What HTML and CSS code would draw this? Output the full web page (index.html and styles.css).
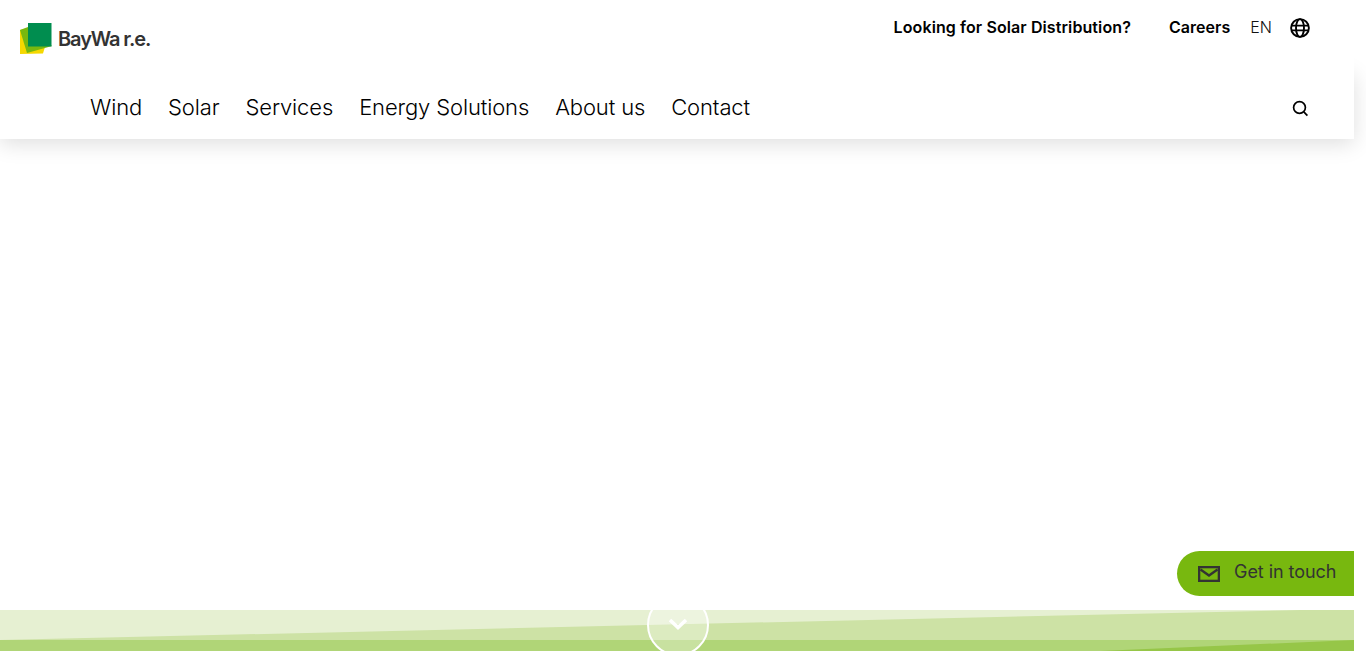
FILE: index.html
```html
<!DOCTYPE html>
<html lang="en">
<head>
<meta charset="utf-8">
<title>BayWa r.e.</title>
<link rel="stylesheet" href="styles.css">
</head>
<body>
<div class="page">
  <header class="header">
    <div class="topbar">
      <a class="logo" href="#">
        <svg class="logo-mark" width="32" height="32" viewBox="0 0 32 32">
          <polygon points="0,7 8,5 25,24 23,30.5 0,31" fill="#f5d800"/>
          <polygon points="0,7 8,4 32,23 7,30" fill="#78b80f"/>
          <rect x="8" y="0" width="23.5" height="23.5" fill="#008d4f"/>
        </svg>
        <span class="logo-text">BayWa r.e.</span>
      </a>
      <nav class="meta">
        <a class="meta-link meta-solar" href="#">Looking for Solar Distribution?</a>
        <a class="meta-link meta-careers" href="#">Careers</a>
        <span class="lang">EN</span>
        <svg class="globe" width="20" height="20" viewBox="0 0 20 20" fill="none" stroke="#000" stroke-width="1.9">
          <circle cx="10" cy="10" r="8.9"/>
          <ellipse cx="10" cy="10" rx="4" ry="8.9"/>
          <path d="M1.5 7.6h17M1.5 12.4h17"/>
        </svg>
      </nav>
    </div>
    <div class="navbar">
      <nav class="mainnav">
        <a href="#">Wind</a>
        <a href="#">Solar</a>
        <a href="#">Services</a>
        <a href="#">Energy Solutions</a>
        <a href="#">About us</a>
        <a href="#">Contact</a>
      </nav>
      <svg class="search" width="17" height="17" viewBox="0 0 17 17" fill="none" stroke="#000" stroke-width="1.7">
        <circle cx="7.5" cy="7.5" r="5.9"/>
        <path d="M11.8 11.8l3.6 3.8"/>
      </svg>
    </div>
  </header>
  <main class="hero"></main>
  <div class="band">
    <svg class="band-art" width="1354" height="41" viewBox="0 0 1354 41" preserveAspectRatio="none">
      <rect width="1354" height="41" fill="#e6f0d2"/>
      <polygon points="0,30 1300,0 1354,0 1354,41 0,41" fill="#cde2a5"/>
      <rect y="30" width="1354" height="11" fill="#b0d577"/>
      <polygon points="1100,41 1354,30 1354,41" fill="#96c648"/>
    </svg>
    <div class="scroll-circle">
      <svg class="chevron" width="20" height="12" viewBox="0 0 20 12" fill="none" stroke="#fff" stroke-width="3.6">
        <path d="M2 2l8 7.5L18 2"/>
      </svg>
    </div>
  </div>
  <a class="touch" href="#">
    <svg class="mail" width="22" height="16" viewBox="0 0 22 16" fill="none" stroke="#333" stroke-width="2.3">
      <rect x="1.15" y="1.15" width="19.7" height="13.7"/>
      <path d="M2.5 3.5L11 9.5l8.5-6"/>
    </svg>
    <span class="touch-label">Get in touch</span>
  </a>
</div>
</body>
</html>
```
FILE: styles.css
```css
html, body {
  margin: 0;
  padding: 0;
  background: #fff;
  overflow: hidden;
}
body {
  font-family: Inter, "Liberation Sans", sans-serif;
  color: #000;
}
a {
  color: inherit;
  text-decoration: none;
}
.page {
  position: relative;
  width: 1354px;
  height: 651px;
  display: flex;
  flex-direction: column;
}
.header {
  flex: none;
}
.topbar {
  height: 70px;
  display: flex;
  justify-content: space-between;
  align-items: flex-start;
  padding: 0 44px 0 20px;
  box-sizing: border-box;
  position: relative;
  z-index: 2;
  background: #fff;
}
.logo {
  display: flex;
  align-items: center;
  margin-top: 23px;
  height: 31px;
}
.logo-mark {
  display: block;
}
.logo-text {
  margin-left: 6px;
  margin-top: 1px;
  font-size: 20px;
  font-weight: 600;
  letter-spacing: -1.1px;
  color: #333;
}
.meta {
  display: flex;
  align-items: center;
  height: 20px;
  margin-top: 18px;
  font-size: 16px;
}
.meta-link {
  font-weight: 600;
  margin-bottom: 2px;
}
.meta-solar {
  margin-right: 38px;
  letter-spacing: 0.1px;
}
.meta-careers {
  margin-right: 20px;
  letter-spacing: 0.05px;
}
.lang {
  margin-right: 18px;
  margin-bottom: 2px;
  font-weight: 300;
  color: #111;
}
.globe {
  display: block;
}
.navbar {
  height: 69px;
  display: flex;
  justify-content: space-between;
  align-items: center;
  padding: 4px 45px 0 90px;
  box-sizing: border-box;
  background: #fff;
  box-shadow: 0 5px 20px rgba(0, 0, 0, 0.13);
}
.mainnav {
  display: flex;
  gap: 26px;
  font-size: 22px;
  font-weight: 300;
  letter-spacing: -0.13px;
}
.search {
  display: block;
  margin-top: 4px;
}
.hero {
  flex: 1;
}
.band {
  flex: none;
  height: 41px;
  position: relative;
}
.band-art {
  display: block;
}
.scroll-circle {
  position: absolute;
  left: 647px;
  top: -16px;
  width: 62px;
  height: 62px;
  box-sizing: border-box;
  border: 2px solid #fff;
  border-radius: 50%;
  background: rgba(255, 255, 255, 0.3);
  display: flex;
  justify-content: center;
  padding-top: 22px;
}
.chevron {
  display: block;
}
.touch {
  position: absolute;
  right: 0;
  top: 551px;
  width: 177px;
  height: 45px;
  box-sizing: border-box;
  padding-left: 21px;
  border-radius: 22.5px 0 0 22.5px;
  background: #78b80f;
  display: flex;
  align-items: center;
  gap: 14px;
  font-size: 18px;
  font-weight: 400;
  letter-spacing: -0.05px;
  color: #333;
}
.touch-label {
  margin-bottom: 4px;
}
.mail {
  display: block;
}
```
